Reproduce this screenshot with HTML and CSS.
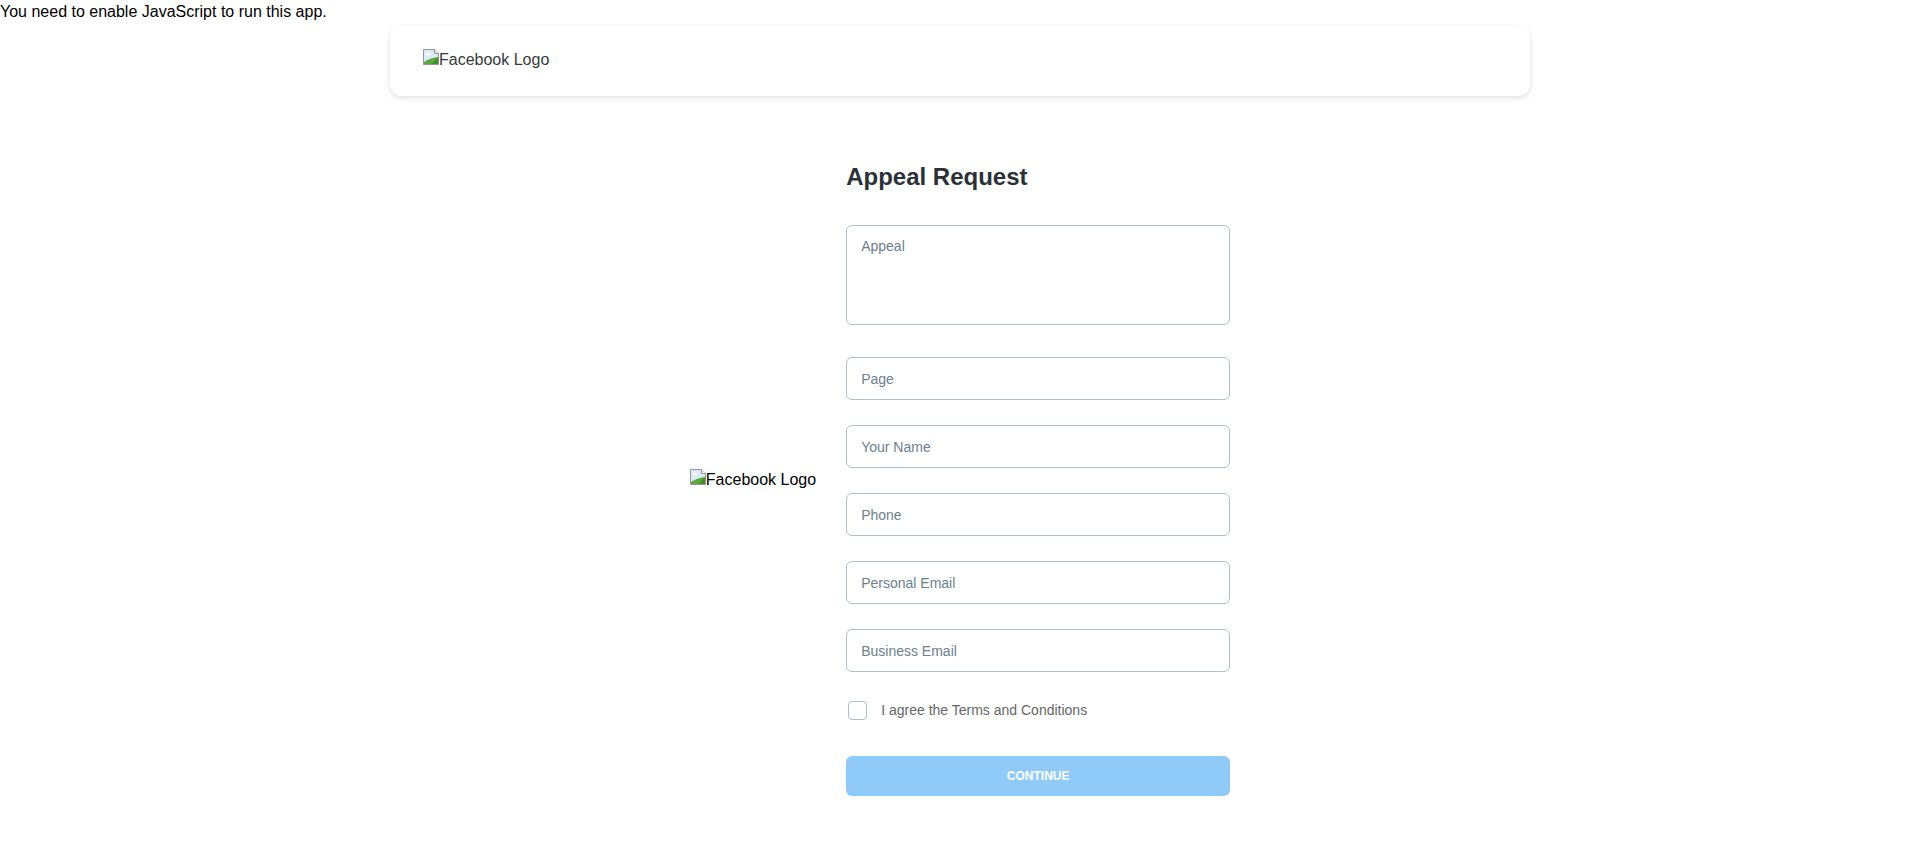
FILE: index.html
```html
<!DOCTYPE html>
<html lang="en">
<head>
<meta charset="utf-8">
<title>Appeal Request</title>
<link rel="stylesheet" href="styles.css">
</head>
<body>
<div class="noscript">You need to enable JavaScript to run this app.</div>
<header class="topbar">
  <span class="broken-img header-logo">
    <svg class="broken-icon" width="16" height="16" viewBox="0 0 16 16" aria-hidden="true">
      <path d="M0.5 0.5h11l4 4v11h-15z" fill="#dce9f6" stroke="#8f969c" stroke-width="1"/>
      <path d="M11.5 0.5v4h4" fill="#ffffff" stroke="#8f969c" stroke-width="1"/>
      <ellipse cx="5" cy="5" rx="2.6" ry="1.3" fill="#ffffff"/>
      <path d="M1 15 L1 13 Q7 9 15 8 L15 15z" fill="#5aa83b"/>
      <path d="M15 8 L15 15 L9 15z" fill="#3e8f28"/>
    </svg>Facebook Logo
  </span>
</header>
<main class="main">
  <div class="broken-img side-logo">
    <svg class="broken-icon" width="16" height="16" viewBox="0 0 16 16" aria-hidden="true">
      <path d="M0.5 0.5h11l4 4v11h-15z" fill="#dce9f6" stroke="#8f969c" stroke-width="1"/>
      <path d="M11.5 0.5v4h4" fill="#ffffff" stroke="#8f969c" stroke-width="1"/>
      <ellipse cx="5" cy="5" rx="2.6" ry="1.3" fill="#ffffff"/>
      <path d="M1 15 L1 13 Q7 9 15 8 L15 15z" fill="#5aa83b"/>
      <path d="M15 8 L15 15 L9 15z" fill="#3e8f28"/>
    </svg>Facebook Logo
  </div>
  <form class="form">
    <h1 class="title">Appeal Request</h1>
    <textarea class="field area" placeholder="Appeal"></textarea>
    <input class="field line first" type="text" placeholder="Page">
    <input class="field line" type="text" placeholder="Your Name">
    <input class="field line" type="text" placeholder="Phone">
    <input class="field line" type="text" placeholder="Personal Email">
    <input class="field line" type="text" placeholder="Business Email">
    <label class="agree">
      <span class="checkbox"></span>
      <span class="agree-text">I agree the Terms and Conditions</span>
    </label>
    <button class="continue" type="button" disabled>CONTINUE</button>
  </form>
</main>
</body>
</html>
```
FILE: styles.css
```css
html, body {
  margin: 0;
  padding: 0;
  background: #ffffff;
}

body {
  font-family: "Liberation Sans", Arial, sans-serif;
  font-size: 16px;
  color: #000000;
}

.noscript {
  line-height: 24px;
}

.topbar {
  width: 1140px;
  height: 70px;
  margin: 2px auto 0;
  box-sizing: border-box;
  padding: 0 33px;
  display: flex;
  align-items: center;
  border-radius: 12px;
  background: #ffffff;
  box-shadow: 0 2px 6px rgba(0, 0, 0, 0.13);
}

.broken-img {
  display: inline-flex;
  align-items: flex-start;
  font-size: 16px;
  line-height: 18px;
  white-space: nowrap;
}

.broken-icon {
  display: block;
  flex: none;
  margin-top: -2px;
}

.header-logo {
  color: #343a40;
  margin-top: -2px;
}

.side-logo {
  color: #000000;
}

.main {
  margin-top: 67px;
  display: flex;
  justify-content: center;
  align-items: center;
  gap: 30px;
}

.form {
  width: 384px;
  display: flex;
  flex-direction: column;
  margin: 0;
}

.title {
  margin: 0;
  font-size: 24px;
  line-height: 28px;
  font-weight: 700;
  color: #2a3138;
}

.field {
  display: block;
  box-sizing: border-box;
  width: 100%;
  border: 1px solid #b0bec5;
  border-radius: 6px;
  background: #ffffff;
  font-family: "Liberation Sans", Arial, sans-serif;
  font-size: 14px;
  color: #2a3138;
  outline: none;
  margin: 0;
}

.field::placeholder {
  color: #6b8090;
  opacity: 1;
}

.area {
  margin-top: 34px;
  height: 100px;
  padding: 12px 14px;
  resize: none;
  line-height: 16px;
}

.line {
  height: 43px;
  padding: 0 14px;
  margin-top: 25px;
}

.line.first {
  margin-top: 32px;
}

.agree {
  margin-top: 28px;
  display: flex;
  align-items: center;
  height: 20px;
}

.checkbox {
  box-sizing: border-box;
  width: 19px;
  height: 19px;
  margin-left: 2px;
  border: 1.5px solid #b0bec5;
  border-radius: 4px;
  background: #ffffff;
  flex: none;
}

.agree-text {
  margin-left: 14px;
  font-size: 14px;
  color: #666666;
  line-height: 16px;
}

.continue {
  margin-top: 36px;
  height: 40px;
  width: 100%;
  border: none;
  border-radius: 6px;
  background: #90caf9;
  color: #ffffff;
  font-family: "Liberation Sans", Arial, sans-serif;
  font-size: 12px;
  font-weight: 700;
  letter-spacing: 0;
  padding: 0;
}
```
